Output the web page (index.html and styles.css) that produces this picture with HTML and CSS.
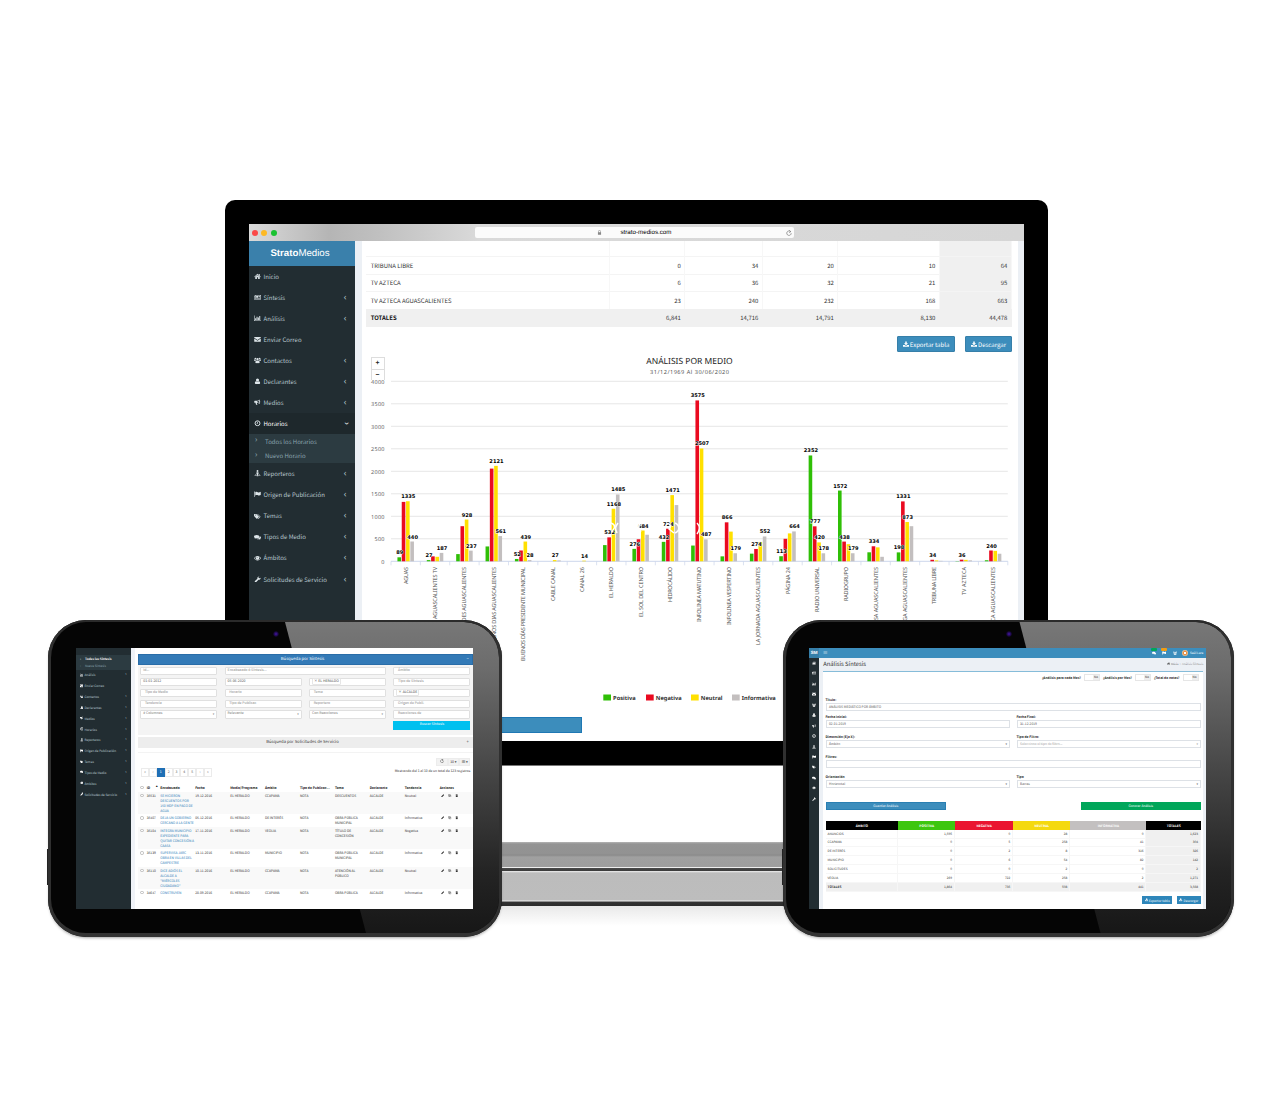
FILE: index.html
```html
<!DOCTYPE html>
<html lang="es">
<head>
  <meta charset="UTF-8" />
  <meta name="viewport" content="width=device-width, initial-scale=1.0" />
  <title>StratoMedios</title>
  <link rel="stylesheet" href="styles.css">
</head>
<body>
  <svg class="sprite" xmlns="http://www.w3.org/2000/svg">
    <symbol id="i-home" viewBox="0 0 16 16"><path d="M8 2 0 9l1 1.200 7-6 7 6L16 9l-2.500-2.200V2.500h-2v2.500zM8 5.500 2.500 10v4.500h4V10.500h3v4h4V10z"/></symbol>
    <symbol id="i-news" viewBox="0 0 18 16"><path fill-rule="evenodd" d="M3 2h15v12H1.500A1.500 1.500 0 0 1 0 12.500V4h3zm1.500 1.400v9.200h12V3.400zM1.200 5.200v7.300h1.800V5.200zM5.500 5h5v4h-5zm6 0h4v1h-4zm0 2h4v1h-4zm-6 3h10v1h-10z"/></symbol>
    <symbol id="i-chart" viewBox="0 0 18 16"><path d="M0 1h1.400v12.600H18V15H0zM3 8h2.500v4.500H3zm3.500-4H9v8.500H6.500zM10 6h2.500v6.500H10zm3.500-4H16v10.500h-2.500z"/></symbol>
    <symbol id="i-mail" viewBox="0 0 16 16"><path d="M0 2.500h16v1.700L8 10 0 4.200zM0 6l8 5.700L16 6v8H0z"/></symbol>
    <symbol id="i-users" viewBox="0 0 18 16"><circle cx="9" cy="5.500" r="3"/><circle cx="3.500" cy="3.500" r="2.200"/><circle cx="14.500" cy="3.500" r="2.200"/><path d="M0 6.500c1.500-1 3 0 4.500 0l.8 2.500H0zM18 6.500c-1.500-1-3 0-4.500 0L12.700 9H18zM3.500 14c0-3 1-5 3-5.300 1.500 1.200 3.500 1.200 5 0 2 .3 3 2.300 3 5.300 0 1-1 1.500-2 1.500h-7c-1 0-2-.5-2-1.500z"/></symbol>
    <symbol id="i-user" viewBox="0 0 16 16"><circle cx="8" cy="4.800" r="3.800"/><path d="M1.500 13c0-3 1-5 3.200-5 2 1.500 4.600 1.500 6.600 0 2.200 0 3.200 2 3.200 5 0 1.300-1 2-2 2h-9c-1 0-2-.7-2-2z"/></symbol>
    <symbol id="i-horn" viewBox="0 0 16 16"><path fill-rule="evenodd" d="M13.500 1v4.500a1.300 1.300 0 0 1 0 2.600V12.500C11.500 10.800 9.500 9.500 6.500 9.200c-.5 1.500 1 3.300 1.500 4.800H4.500C4 12.500 3 11 3.500 9.200H1.500A1.500 1.500 0 0 1 0 7.700V6a1.500 1.500 0 0 1 1.500-1.500h4.500C9 4.500 11.500 3 13.500 1zM12 4C10.500 5 9 5.500 7.500 5.700v2.200c1.500.2 3 .8 4.500 1.700z"/></symbol>
    <symbol id="i-clock" viewBox="0 0 16 16"><circle cx="8" cy="8" r="6" fill="none" stroke="currentColor" stroke-width="2.400"/><path d="M7.300 4.500h1.800v5H5.500V7.700h1.800z"/></symbol>
    <symbol id="i-street" viewBox="0 0 16 16"><circle cx="8" cy="2.500" r="2.300"/><path d="M5.500 5.300h5V10H9.800v4H6.200v-4h-.7zM4.500 11.500 2.500 12.800 8 15l5.500-2.200-2-1.300V10.200L16 12.800 8 16 0 12.800l4.500-2.600z"/></symbol>
    <symbol id="i-flag" viewBox="0 0 16 16"><path d="M0 1.500h1.800V15H.5zM2.500 3c3-2 5 0 7 .5s4-.5 6.500-1.500v8c-2 1-4 1.500-6 .8-2.500-1-4.500-1.300-7.500.5z"/></symbol>
    <symbol id="i-tags" viewBox="0 0 18 16"><path fill-rule="evenodd" d="M0 2h6l7 7-5.500 6L0 7.500zm3.200 1.700a1.300 1.300 0 1 0 .1 2.600 1.300 1.300 0 0 0-.1-2.600zM8 2h1.500l7.500 7-5.500 6-1.500-.8L15 9z"/></symbol>
    <symbol id="i-chat" viewBox="0 0 18 16"><path d="M7 2c4 0 7 2 7 4.500S11 11 7 11c-.7 0-1.400 0-2-.2C3.800 11.700 2.500 12 1 12c.8-.7 1.400-1.300 1.500-2C1 9.200 0 8 0 6.500 0 4 3 2 7 2zm8.300 3.500C17 6.400 18 7.600 18 9s-1 2.500-2.500 3.300c.1.700.7 1.300 1.500 2-1.500 0-2.800-.3-4-1.200-2.300.5-4.700 0-6.200-.9 5-.2 8.700-2.700 8.500-6.700z"/></symbol>
    <symbol id="i-eye" viewBox="0 0 18 16"><path fill-rule="evenodd" d="M9 2.500c4 0 7 2.500 9 5.500-2 3-5 5.500-9 5.500S2 11 0 8c2-3 5-5.500 9-5.500zM5.300 4.800A9 9 0 0 0 1.700 8C3.500 10.500 6 12.200 9 12.200s5.500-1.700 7.300-4.200a9 9 0 0 0-3.600-3.200 4.500 4.500 0 1 1-7.400 0zM9 4.500A3 3 0 0 0 6.500 7H8a1.500 1.500 0 0 1 1-1.200z"/></symbol>
    <symbol id="i-wrench" viewBox="0 0 16 16"><path d="M15.500 4.500c.8 3-2 5.500-5 4.800l-6 6c-1.700 1.500-4.500-1-2.800-2.800l6-6C7 3 9.500.5 12.800 1L10.500 3l.3 2.200 2.200.5z"/></symbol>
    <symbol id="i-down" viewBox="0 0 16 16"><path fill-rule="evenodd" d="M6 1h4v5h3.500L8 11.200 2.500 6H6zM0 10.500h4.500L8 13.500l3.500-3H16V15H0z"/></symbol>
    <symbol id="i-lock" viewBox="0 0 16 16"><path fill-rule="evenodd" d="M4 7V5a4 4 0 0 1 8 0v2h1v8H3V7zm1.600 0h4.800V5a2.400 2.400 0 0 0-4.800 0z"/></symbol>
    <symbol id="i-reload" viewBox="0 0 16 16"><path d="M12.500 4.500A6 6 0 1 0 14 8.500M8.500.5l4.300 3.800-4.500 2.800" fill="none" stroke="currentColor" stroke-width="1.600"/></symbol>
    <symbol id="i-pencil" viewBox="0 0 16 16"><path d="m1 15 1-4.500L11 1.500l3.500 3.500-9 9z"/></symbol>
    <symbol id="i-copy" viewBox="0 0 16 16"><path d="M2 2h8v8H2zM6 6h8v8H6z" fill="none" stroke="currentColor" stroke-width="1.600"/></symbol>
    <symbol id="i-trash" viewBox="0 0 16 16"><path d="M2 3h12v1.800H2zM6 1h4v2H6zM3.500 6h9l-.5 9H4z"/></symbol>
  </svg>

  <div class="stage">
    <div class="stand">
      <div class="neck"></div>
      <div class="foot"></div>
      <div class="stand-shadow"></div>
    </div>

    <!-- Monitor -->
    <div class="monitor">
      <div class="screen">
        <div class="titlebar">
          <i class="dot red"></i><i class="dot amber"></i><i class="dot green"></i>
          <div class="url">
            <svg class="lock"><use href="#i-lock"/></svg>
            <span>strato-medios.com</span>
            <svg class="reload"><use href="#i-reload"/></svg>
          </div>
        </div>
        <div class="app">
          <nav class="sidebar">
            <div class="brand"><b>Strato</b>Medios</div>
            <a class="item"><svg><use href="#i-home"/></svg>Inicio</a>
            <a class="item more"><svg><use href="#i-news"/></svg>Síntesis</a>
            <a class="item more"><svg><use href="#i-chart"/></svg>Análisis</a>
            <a class="item"><svg><use href="#i-mail"/></svg>Enviar Correo</a>
            <a class="item more"><svg><use href="#i-users"/></svg>Contactos</a>
            <a class="item more"><svg><use href="#i-user"/></svg>Declarantes</a>
            <a class="item more"><svg><use href="#i-horn"/></svg>Medios</a>
            <a class="item more open"><svg><use href="#i-clock"/></svg>Horarios</a>
            <div class="submenu">
              <a>Todos los Horarios</a>
              <a>Nuevo Horario</a>
            </div>
            <a class="item more"><svg><use href="#i-street"/></svg>Reporteros</a>
            <a class="item more"><svg><use href="#i-flag"/></svg>Origen de Publicación</a>
            <a class="item more"><svg><use href="#i-tags"/></svg>Temas</a>
            <a class="item more"><svg><use href="#i-chat"/></svg>Tipos de Medio</a>
            <a class="item more"><svg><use href="#i-eye"/></svg>Ámbitos</a>
            <a class="item more"><svg><use href="#i-wrench"/></svg>Solicitudes de Servicio</a>
          </nav>
          <main class="content">
            <div class="grid">
              <div class="row first"><span></span><span></span><span></span><span></span><span></span><span></span></div>
              <div class="row"><span>TRIBUNA LIBRE</span><span>0</span><span>34</span><span>20</span><span>10</span><span>64</span></div>
              <div class="row"><span>TV AZTECA</span><span>6</span><span>36</span><span>32</span><span>21</span><span>95</span></div>
              <div class="row"><span>TV AZTECA AGUASCALIENTES</span><span>23</span><span>240</span><span>232</span><span>168</span><span>663</span></div>
              <div class="row totals"><span>TOTALES</span><span>6,841</span><span>14,716</span><span>14,791</span><span>8,130</span><span>44,478</span></div>
            </div>
            <div class="actions">
              <a class="btn wide"><svg><use href="#i-down"/></svg>Exportar tabla</a>
              <a class="btn"><svg><use href="#i-down"/></svg>Descargar</a>
            </div>
            <div class="chart-box">
              <svg id="chart" width="650" height="350"></svg>
              <div class="zoom"><span>+</span><span>−</span></div>
            </div>
            <div class="save-bar"></div>
          </main>
        </div>
      </div>
    </div>

    <!-- Left tablet -->
    <div class="tablet tablet-left">
      <div class="bezel"></div>
      <i class="camera"></i>
      <div class="tscreen">
        <nav class="tside">
          <div class="tsub"><a class="on">Todas las Síntesis</a><a>Nueva Síntesis</a></div>
          <a class="titem more"><svg><use href="#i-chart"/></svg>Análisis</a>
          <a class="titem"><svg><use href="#i-mail"/></svg>Enviar Correo</a>
          <a class="titem more"><svg><use href="#i-users"/></svg>Contactos</a>
          <a class="titem more"><svg><use href="#i-user"/></svg>Declarantes</a>
          <a class="titem more"><svg><use href="#i-horn"/></svg>Medios</a>
          <a class="titem more"><svg><use href="#i-clock"/></svg>Horarios</a>
          <a class="titem more"><svg><use href="#i-street"/></svg>Reporteros</a>
          <a class="titem more"><svg><use href="#i-flag"/></svg>Origen de Publicación</a>
          <a class="titem more"><svg><use href="#i-tags"/></svg>Temas</a>
          <a class="titem more"><svg><use href="#i-chat"/></svg>Tipos de Medio</a>
          <a class="titem more"><svg><use href="#i-eye"/></svg>Ámbitos</a>
          <a class="titem more"><svg><use href="#i-wrench"/></svg>Solicitudes de Servicio</a>
        </nav>
        <div class="search">
          <div class="panel-head">Búsqueda por Síntesis<i>−</i></div>
          <div class="filters">
            <span class="in">Id...</span><span class="in span2">Encabezado ó Síntesis...</span><span class="in pad">Ámbito</span>
            <span class="in dark">01-01-2012</span><span class="in dark">05-06-2020</span><span class="in"><b>× EL HERALDO</b></span><span class="in pad">Tipo de Síntesis</span>
            <span class="in pad">Tipo de Medio</span><span class="in pad">Horario</span><span class="in pad">Tema</span><span class="in"><b>× ALCALDE</b></span>
            <span class="in pad">Tendencia</span><span class="in pad">Tipo de Publicac</span><span class="in pad">Reportero</span><span class="in pad">Origen de Publi.</span>
            <span class="in sel"># Columnas</span><span class="in sel">Relevante</span><span class="in sel">Con Reacciones</span><span class="in pad">Reacciones de</span>
            <span class="go">Buscar Síntesis</span>
          </div>
          <div class="panel-head light">Búsqueda por Solicitudes de Servicio<i>+</i></div>
          <div class="tools">
            <div class="toolset"><span><svg><use href="#i-reload"/></svg></span><span>10 ▾</span><span>▦ ▾</span></div>
          </div>
          <div class="pager-row">
            <div class="pager"><span>«</span><span>‹</span><span class="cur">1</span><span>2</span><span>3</span><span>4</span><span>5</span><span>›</span><span>»</span></div>
            <div class="count">Mostrando del 1 al 10 de un total de 123 registros</div>
          </div>
          <div class="list" id="list">
            <div class="lrow lhead"><i></i><span>ID</span><em>▲</em><span>Encabezado</span><span>Fecha</span><span>Medio/Programa</span><span>Ámbito</span><span>Tipo de Publicac...</span><span>Tema</span><span>Declarante</span><span>Tendencia</span><span>Acciones</span></div>
          </div>
        </div>
      </div>
    </div>

    <!-- Right tablet -->
    <div class="tablet tablet-right">
      <div class="bezel"></div>
      <i class="camera"></i>
      <div class="tscreen col">
        <div class="topbar">
          <b>SM</b><i class="burger">≡</i>
          <span class="note n-green"><svg><use href="#i-chat"/></svg></span>
          <span class="note n-orange"><svg><use href="#i-flag"/></svg></span>
          <span class="note"><svg><use href="#i-users"/></svg></span>
          <i class="avatar"></i><span class="who">Saúl Lara</span>
        </div>
        <div class="tbody">
          <nav class="mini">
            <svg><use href="#i-home"/></svg><svg><use href="#i-news"/></svg><svg><use href="#i-chart"/></svg><svg><use href="#i-mail"/></svg><svg><use href="#i-users"/></svg><svg><use href="#i-user"/></svg><svg><use href="#i-horn"/></svg><svg><use href="#i-clock"/></svg><svg><use href="#i-street"/></svg><svg><use href="#i-flag"/></svg><svg><use href="#i-tags"/></svg><svg><use href="#i-chat"/></svg><svg><use href="#i-eye"/></svg><svg><use href="#i-wrench"/></svg>
          </nav>
          <div class="analysis">
            <div class="page-head"><h1>Análisis Síntesis</h1><p><svg><use href="#i-home"/></svg> Inicio <span>&nbsp;›&nbsp; Análisis Síntesis</span></p></div>
            <div class="box">
              <div class="switches">
                <b>¿Análisis para cada Mes?</b><span class="switch"><i>No</i></span>
                <b>¿Análisis por Mes?</b><span class="switch"><i>No</i></span>
                <b>¿Total de notas?</b><span class="switch"><i>No</i></span>
              </div>
              <div class="form">
                <label class="full">Título:<span>ANÁLISIS MEDIÁTICO POR ÁMBITO</span></label>
                <label>Fecha Inicial:<span>02-01-2019</span></label>
                <label>Fecha Final:<span>31-12-2019</span></label>
                <label class="gap">Dimensión (Eje X):<span class="sel">Ámbito</span></label>
                <label class="gap">Tipo de Filtro:<span class="sel ph">Seleccione el tipo de filtro...</span></label>
                <label class="full gap">Filtros:<span></span></label>
                <label class="gap">Orientación<span class="sel">Horizontal</span></label>
                <label class="gap">Tipo<span class="sel">Barras</span></label>
              </div>
              <div class="pair"><span>Guardar Análisis</span><span class="ok">Generar Análisis</span></div>
              <div class="sums">
                <div class="srow shead"><span>ÁMBITO</span><span>POSITIVA</span><span>NEGATIVA</span><span>NEUTRAL</span><span>INFORMATIVA</span><span>TOTALES</span></div>
                <div class="srow"><span>ANUNCIOS</span><span>1,595</span><span>0</span><span>28</span><span>0</span><span>1,623</span></div>
                <div class="srow"><span>CCAPAMA</span><span>0</span><span>5</span><span>258</span><span>41</span><span>304</span></div>
                <div class="srow"><span>DE INTERÉS</span><span>0</span><span>2</span><span>8</span><span>316</span><span>326</span></div>
                <div class="srow"><span>MUNICIPIO</span><span>0</span><span>6</span><span>54</span><span>82</span><span>142</span></div>
                <div class="srow"><span>SOLICITUDES</span><span>0</span><span>0</span><span>2</span><span>0</span><span>2</span></div>
                <div class="srow"><span>VEOLIA</span><span>269</span><span>722</span><span>258</span><span>2</span><span>1,271</span></div>
                <div class="srow stotal"><span>TOTALES</span><span>1,864</span><span>735</span><span>508</span><span>441</span><span>3,568</span></div>
              </div>
              <div class="tactions"><a><svg><use href="#i-down"/></svg>Exportar tabla</a><a><svg><use href="#i-down"/></svg>Descargar</a></div>
            </div>
          </div>
        </div>
      </div>
    </div>
  </div>
  <script src="app.js"></script>
</body>
</html>
```

FILE: styles.css
```css
* {
  box-sizing: border-box;
  margin: 0;
  padding: 0;
}

body {
  font-family: "Noto Sans CJK JP", "Noto Sans", sans-serif;
  background: #fff;
  color: #333;
  width: 1280px;
  height: 1100px;
  overflow: hidden;
  text-rendering: geometricPrecision;
}

svg {
  fill: currentColor;
  flex: none;
}

i, em {
  font-style: normal;
}

.sprite {
  position: absolute;
  width: 0;
  height: 0;
}

.stage {
  position: relative;
  width: 1280px;
  height: 1100px;
}

/* Stand */
.stand {
  position: absolute;
  left: 485px;
  top: 842px;
  width: 315px;
}

.neck {
  height: 25px;
  background: linear-gradient(#b5b5b5 0, #949494 2px, #929292 12px, #8a8a8a 13px, #a0a0a0 15px, #9e9e9e 24px);
}

.foot {
  height: 39px;
  border-top: 1px solid #eee;
  background: linear-gradient(#4a4a4a 0, #3a3a3a 3px, #eee 3px, #bcbcbc 5px, #bdbdbd 32px, #eee 33px, #333 34px, #2c2c2c 38px);
}

.stand-shadow {
  height: 20px;
  background: linear-gradient(#e9e9e9, #fff);
}

/* Monitor */
.monitor {
  position: absolute;
  left: 225px;
  top: 200px;
  width: 823px;
  height: 566px;
  padding: 24px 24px 0;
  background: #000;
  border-radius: 10px 10px 8px 8px;
  border-bottom: 1px solid #777;
}

.screen {
  width: 775px;
  height: 517px;
  background: #fff;
  overflow: hidden;
}

.titlebar {
  display: flex;
  align-items: center;
  gap: 3.500px;
  height: 17px;
  padding-left: 2.500px;
  background: linear-gradient(90deg, #dadada 0, #b5b5b5 80px, #c0c0c0 130px, #dadada 230px, #d6d6d6 100%);
}

.dot {
  width: 6px;
  height: 6px;
  border-radius: 50%;
}

.red { background: #fb4948; }
.amber { background: #fdb924; }
.green { background: #1ac231; }

.url {
  display: flex;
  align-items: center;
  width: 319px;
  height: 11px;
  margin-left: 195px;
  padding: 0 2.500px 0 121.500px;
  border-radius: 2px;
  background: #fbfbfb;
  font: 6.200px/11px "Liberation Sans", sans-serif;
  color: #000;
}

.url span { margin-left: 19px; }
.lock { width: 5px; height: 5px; color: #888; }
.reload { width: 6px; height: 6px; margin-left: auto; color: #666; }

.app {
  display: flex;
  height: 500px;
}

.sidebar {
  flex: none;
  width: 106px;
  background: #222d32;
  color: #b8c7ce;
}

.brand {
  height: 24.500px;
  background: #3a80ab;
  color: #fff;
  font: 9.700px/26px "Liberation Sans", sans-serif;
  text-align: center;
  padding-right: 4px;
}

.item {
  display: flex;
  align-items: center;
  height: 21.080px;
  padding-left: 4.500px;
  font-size: 6px;
}

.item svg {
  width: 7px;
  height: 6.500px;
  margin-right: 3px;
  color: #dde5e9;
}

.more::after {
  content: "‹";
  width: 4px;
  margin: -2px 8px 0 auto;
  font: 9px/9px "Open Sans", sans-serif;
  text-align: center;
}

.item.open {
  background: #1e282c;
  color: #fff;
}

.item.open::after { transform: rotate(-90deg); margin-top: 0; }

.submenu {
  height: 29px;
  background: #2c3b41;
}

.submenu a {
  display: flex;
  align-items: center;
  height: 14.500px;
  padding-left: 6px;
  color: #8aa4af;
  font-size: 6px;
}

.submenu a::before {
  content: "›";
  width: 10px;
  margin-top: -2px;
  font: 8px/8px "Open Sans", sans-serif;
}

.content {
  flex: 1;
  min-width: 0;
  padding: 0 5.700px 0 4px;
  border-left: 7px solid #ecf0f5;
  border-right: 6px solid #ecf0f5;
}

.row {
  display: grid;
  grid-template-columns: 244.300px 75px 77.500px 75.500px 101.500px 72px;
  height: 17.500px;
  font-size: 5.950px;
  line-height: 17px;
}

.row.first { height: 15.800px; }

.row span {
  text-align: right;
  padding-right: 3.500px;
  border-right: 1px solid #f7f7f7;
  border-bottom: 1px solid #f4f4f4;
}

.row span:first-child {
  text-align: left;
  padding-left: 4.700px;
}

.row span:last-child,
.totals span { background: #f0f0f0; }
.totals span { border-color: #f0f0f0; }
.totals span:first-child { font-weight: bold; color: #111; }

.actions {
  display: flex;
  justify-content: flex-end;
  gap: 9.500px;
  margin-top: 9.500px;
}

.btn {
  display: flex;
  align-items: center;
  justify-content: center;
  gap: 1px;
  width: 47.500px;
  height: 16px;
  background: #3c8dbc;
  border: 1px solid #367fa9;
  border-radius: 1px;
  color: #fff;
  font-size: 6px;
}

.btn.wide { width: 58.500px; }
.btn svg { width: 6px; height: 6px; }

.chart-box {
  position: relative;
  height: 350px;
  margin-top: 3.700px;
}

#chart {
  display: block;
  overflow: visible;
  font-family: "Noto Sans", sans-serif;
}

.zoom {
  position: absolute;
  left: 4.500px;
  top: 1px;
  width: 14px;
}

.zoom span {
  display: block;
  height: 13px;
  border: 1px solid #ddd;
  font: bold 7px/12px "Open Sans", sans-serif;
  text-align: center;
  color: #222;
}

.zoom span + span {
  height: 10px;
  border-top: 0;
  border-bottom: 0;
}

.axis { font-size: 5.500px; fill: #666; letter-spacing: .25px; }
.cat { font-size: 5.500px; fill: #555; }
.value {
  font: bold 5.100px "DejaVu Sans", sans-serif;
  fill: #000;
  stroke: #fff;
  stroke-width: .8px;
  paint-order: stroke;
}
.legend { font-size: 5.700px; font-weight: bold; fill: #333; }
.glare { fill: none; stroke: #fff; stroke-width: 1.500px; }

.save-bar {
  width: 215.700px;
  height: 16px;
  margin-top: 11px;
  background: #3c8dbc;
  border: 1px solid #1f78b4;
}

/* Tablets */
.tablet {
  position: absolute;
  top: 620px;
  height: 317px;
  border-radius: 38px;
  background: #050505;
  box-shadow: 0 2px 3px -1px rgba(0, 0, 0, .35);
}

.tablet-left {
  left: 48px;
  width: 454px;
  padding: 27.500px 0 0 28px;
}

.tablet-right {
  left: 782.500px;
  width: 451.500px;
  padding: 27.500px 0 0 26.500px;
}

.tablet::before {
  content: "";
  position: absolute;
  left: -1px;
  top: 229px;
  width: 2px;
  height: 36px;
  background: #222;
}

.tablet::after {
  content: "";
  position: absolute;
  inset: 0;
  border: 3px solid #303030;
  border-top: 2px solid #2b2b2b;
  border-bottom: 4px solid #333;
  border-radius: 38px;
}

.bezel {
  position: absolute;
  inset: 2px 3px 4px;
  border-radius: 35px;
  background: linear-gradient(#777 0, #6c6c6c 15%, #444 50%, #242424 80%, #171717 100%);
  clip-path: polygon(234px 0, 100% 0, 100% 100%, 315px 100%);
}

.camera {
  position: absolute;
  left: 225px;
  top: 11px;
  width: 6px;
  height: 6px;
  border-radius: 50%;
  background: radial-gradient(#4416a8, #0a0418 70%);
}

.tablet-right .camera { left: 223.500px; }

.tscreen {
  position: relative;
  display: flex;
  width: 397.300px;
  height: 261px;
  background: #fff;
  overflow: hidden;
  font-size: 3.500px;
}

.tscreen.col { flex-direction: column; }

.tside {
  flex: none;
  width: 55px;
  padding-top: 7px;
  background: #222d32;
  color: #b8c7ce;
  font-size: 3.100px;
  white-space: nowrap;
}

.tsub {
  height: 15px;
  padding-left: 4px;
  background: #2c3b41;
  line-height: 7.500px;
  color: #8aa4af;
}

.tsub a { display: block; }
.tsub a::before { content: "›"; margin-right: 4px; }
.tsub .on { color: #fff; font-weight: bold; }

.titem {
  display: flex;
  align-items: center;
  height: 10.840px;
  padding-left: 3.500px;
}

.titem svg { width: 3.800px; height: 3.800px; margin-right: 1.200px; color: #fff; }
.titem.more::after { width: 2px; margin: -1px 4px 0 auto; font-size: 4.500px; line-height: 4px; }

.search {
  flex: 1;
  min-width: 0;
  border-left: 4px solid #f0f3f8;
  padding: 6.500px .5px 0 2.700px;
}

.panel-head {
  height: 10.500px;
  background: #337ab7;
  border: 1px solid #2a6da8;
  color: #fff;
  font-size: 4.200px;
  line-height: 8.500px;
  text-align: center;
}

.panel-head i { float: right; margin-right: 3px; }
.panel-head.light { background: #ededed; border-color: #ededed; color: #333; margin-top: 2px; }

.filters {
  display: grid;
  grid-template-columns: repeat(4, 77.100px);
  grid-auto-rows: 8.300px;
  column-gap: 7.300px;
  row-gap: 2.550px;
  height: 70.500px;
  padding: 2.500px;
  background: #f4f4f4;
}

.in {
  position: relative;
  padding-left: 2px;
  border: .6px solid #e0e0e0;
  border-radius: 1px;
  background: #fff;
  color: #888;
  line-height: 6.500px;
}

.in.pad { padding-left: 3.700px; }
.in.dark { color: #555; }
.in.sel { color: #777; }
.in.span2 { grid-column: span 2; }
.in b { font-weight: normal; color: #444; border: .5px solid #e6e6e6; border-radius: 1px; padding: 0 1px; }
.sel::after { content: "▾"; float: right; margin-right: 2px; font-size: 3px; }

.go {
  grid-column: 4;
  background: #00c0ef;
  color: #fff;
  text-align: center;
  line-height: 8px;
}

.tools {
  display: flex;
  justify-content: flex-end;
  margin-top: 4.500px;
  padding: 4.500px 2.500px 0 0;
  border-top: 1px solid #f3f3f3;
}

.toolset { display: flex; background: #f2f2f2; }
.toolset span {
  width: 11.300px;
  height: 8.500px;
  border: .5px solid #ececec;
  line-height: 7px;
  text-align: center;
  color: #333;
}
.toolset svg { width: 4px; height: 4px; }

.pager-row {
  display: flex;
  justify-content: space-between;
  padding: 0 2.500px 0 3.500px;
}

.pager { display: flex; margin-top: 2px; }
.pager span {
  width: 7.850px;
  height: 8.500px;
  border: .5px solid #ebebeb;
  text-align: center;
  line-height: 7px;
  color: #555;
}
.pager .cur { background: #1f6fb5; border-color: #1f6fb5; color: #fff; }
.count { margin-top: 1.500px; font-size: 3.350px; line-height: 6px; }

.list { margin-top: 7.500px; }

.lrow {
  display: grid;
  grid-template-columns: 9px 9px 4.500px 35px 35px 34.700px 35px 35px 34.800px 35px 35px 30px;
  padding: 1.300px 0 1.250px;
  font-size: 3.300px;
  line-height: 4.980px;
}

.lrow:nth-child(even) { background: #f9f9f9; }
.lrow a { color: #2a7ab8; white-space: pre; }
.lhead { font-weight: bold; color: #111; white-space: nowrap; }
.lhead em { font-size: 2px; }
.lrow i {
  width: 3.400px;
  height: 3.400px;
  margin: .8px 0 0 2.500px;
  border: .5px solid #bbb;
  border-radius: 50%;
}
.acts { display: flex; gap: 3.400px; padding: .8px 0 0 1.500px; }
.acts svg { width: 3.500px; height: 3.500px; }

/* Right tablet screen */
.topbar {
  display: flex;
  align-items: center;
  height: 10.500px;
  padding-right: 3px;
  background: #3c8dbc;
  color: #fff;
}

.topbar b { width: 10.300px; height: 10.500px; line-height: 9px; text-align: center; background: #367fa9; font-family: "Liberation Sans", sans-serif; font-size: 4.500px; }
.burger { flex: 1; padding-left: 3.500px; font-size: 5px; }
.note { position: relative; width: 10.400px; padding: 0 3px; }
.note svg { display: block; width: 4.200px; height: 4.200px; }
.n-green::before,
.n-orange::before {
  content: "";
  position: absolute;
  left: 2.300px;
  top: -3px;
  width: 6px;
  height: 3px;
  border-radius: 1px;
  background: #00a65a;
}
.n-orange::before { background: #f39c12; }
.avatar { width: 6px; height: 6px; margin: 0 2px; border-radius: 50%; background: radial-gradient(#fff 25%, #e58a3c 35%, #f7d9b8 80%); }
.who { font-size: 3.100px; }

.tbody { display: flex; flex: 1; }

.mini {
  display: flex;
  flex-direction: column;
  align-items: center;
  gap: 6.450px;
  width: 10.300px;
  padding-top: 3px;
  background: #222d32;
  color: #fff;
}

.mini svg { width: 4px; height: 4px; }

.analysis {
  flex: 1;
  padding: 0 3px 0 4px;
  background: #ecf0f5;
}

.page-head {
  display: flex;
  justify-content: space-between;
  height: 12.500px;
  line-height: 12px;
}

.page-head h1 { font-size: 5.800px; font-weight: normal; }
.page-head p { font-size: 2.900px; color: #444; }
.page-head p span { color: #888; }
.page-head svg { width: 3px; height: 3px; }

.box {
  height: 238px;
  padding: 0 2.300px;
  border-top: 1px solid #86bcd9;
  background: #fff;
}

.switches {
  display: flex;
  justify-content: flex-end;
  align-items: center;
  height: 12px;
  padding: 0 2.500px;
  font-size: 3.300px;
  color: #222;
}

.switch {
  width: 16px;
  height: 7px;
  margin: 0 3px;
  border: .5px solid #e6e6e6;
}
.switch:last-child { margin-right: 0; }
.switch i {
  display: block;
  width: 6px;
  height: 5px;
  margin-left: 8px;
  background: #eee;
  font-size: 3px;
  line-height: 5px;
  text-align: center;
}

.form {
  display: grid;
  grid-template-columns: 184.500px 184.500px;
  column-gap: 6.500px;
  margin-top: 12px;
}

.form label {
  height: 17.400px;
  padding-top: 1px;
  font-size: 3.300px;
  font-weight: bold;
  line-height: 6px;
  color: #222;
}

.form .full { grid-column: span 2; }
.form .gap { height: 20px; padding-top: 3.600px; }

.form span {
  display: block;
  height: 8.500px;
  padding-left: 2.500px;
  border: .7px solid #dde1e6;
  font-weight: normal;
  line-height: 6.500px;
  color: #555;
}
.form .ph { color: #999; }

.pair { display: flex; justify-content: space-between; margin-top: 11.500px; }
.pair span {
  width: 120.500px;
  height: 8.300px;
  background: #3c8dbc;
  border: .7px solid #2a7fb2;
  color: #fff;
  font-size: 3.300px;
  line-height: 6.500px;
  text-align: center;
}
.pair .ok { background: #00a65a; border-color: #00a65a; }

.sums { margin-top: 10.500px; }

.srow {
  display: grid;
  grid-template-columns: 72.800px 56.700px 58.300px 57px 76.200px 54.500px;
  height: 8.860px;
  font-size: 3.200px;
  line-height: 8px;
}
.srow span { text-align: right; padding-right: 2px; border-right: .5px solid #f6f6f6; border-bottom: .5px solid #f6f6f6; }
.srow span:first-child { text-align: left; padding-left: 2px; }
.srow span:last-child, .stotal span { background: #f0f0f0; }
.stotal span:first-child { font-weight: bold; }
.shead { height: 9px; font-weight: bold; color: #fff; line-height: 9px; }
.shead span, .shead span:first-child { padding: 0; border: 0; text-align: center; background: #000; }
.shead span:nth-child(2) { background: #3dc60f; }
.shead span:nth-child(3) { background: #ea1530; }
.shead span:nth-child(4) { background: #f4d90f; }
.shead span:nth-child(5) { background: #c3c0c0; }
.shead span:last-child { background: #000; }

.tactions { display: flex; justify-content: flex-end; gap: 4.500px; margin-top: 4.500px; }
.tactions a {
  display: flex;
  align-items: center;
  justify-content: center;
  gap: .6px;
  width: 30px;
  height: 8.300px;
  background: #2e86ba;
  color: #fff;
  font-size: 3.200px;
}
.tactions a + a { width: 24.300px; }
.tactions svg { width: 3.500px; height: 3.500px; }
```

FILE: app.js
```js
const colors = ["#2fbf06", "#ea0a20", "#ffe000", "#c3bfbf"];
const series = ["Positiva", "Negativa", "Neutral", "Informativa"];

// name, label length, values, indexes of the bars that carry a value label
const data = [
  ["AGUAS", 17, [89, 1320, 1335, 440], [0, 2, 3]],
  ["AGUASCALIENTES TV", 52, [27, 110, 100, 187], [0, 3]],
  ["BUENAS TARDES AGUASCALIENTES", 85, [160, 780, 928, 237], [2, 3]],
  ["BUENOS DIAS AGUASCALIENTES", 79, [330, 2060, 2121, 561], [2, 3]],
  ["BUENOS DÍAS PRESIDENTE MUNICIPAL", 94, [52, 240, 439, 28], [0, 2, 3]],
  ["CABLE CANAL", 34, [0, 0, 27, 20], [2]],
  ["CANAL 26", 25, [0, 0, 14, 0], [2]],
  ["EL HERALDO", 31, [360, 532, 1168, 1485], [1, 2, 3]],
  ["EL SOL DEL CENTRO", 50, [276, 490, 684, 590], [0, 2]],
  ["HIDROCÁLIDO", 35, [432, 724, 1471, 1250], [0, 1, 2]],
  ["INFOLINEA MATUTINO", 55, [350, 3575, 2507, 487], [1, 2, 3]],
  ["INFOLINEA VESPERTINO", 58, [110, 866, 660, 179], [1, 3]],
  ["LA JORNADA AGUASCALIENTES", 78, [170, 274, 430, 552], [1, 3]],
  ["PÁGINA 24", 27, [113, 500, 620, 664], [0, 3]],
  ["RADIO UNIVERSAL", 45, [2352, 777, 420, 178], [0, 1, 2, 3]],
  ["RADIOGRUPO", 34, [1572, 438, 380, 179], [0, 1, 3]],
  ["TELEVISA AGUASCALIENTES", 70, [200, 334, 310, 100], [1]],
  ["TVGA AGUASCALIENTES", 60, [198, 1331, 873, 780], [0, 1, 2]],
  ["TRIBUNA LIBRE", 37, [0, 34, 20, 10], [1]],
  ["TV AZTECA", 28, [6, 36, 32, 21], [1]],
  ["TV AZTECA AGUASCALIENTES", 75, [23, 240, 232, 168], [1]]
];

const left = 25, right = 641.8, zero = 205.3, unit = 0.045;
const step = (right - left) / data.length;
let out = "";

out += `<text x="323.500" y="8" text-anchor="middle" font-size="8.500" fill="#222" textLength="86.500">ANÁLISIS POR MEDIO</text>`;
out += `<text x="323.500" y="18.300" text-anchor="middle" font-size="5.600" fill="#555" textLength="79">31/12/1969 Al 30/06/2020</text>`;

for (let v = 0; v <= 4000; v += 500) {
  const y = zero - v * unit;
  out += `<path d="M${left} ${y}H${right}" stroke="${v ? "#e6e6e6" : "#ccd6eb"}"/>`;
  out += `<text class="axis" x="18.700" y="${y + 2.300}" text-anchor="end">${v}</text>`;
}

let labels = "";
data.forEach(([name, len, values, shown], n) => {
  const mid = left + step * (n + 0.5);
  out += `<path d="M${left + step * n} ${zero}v4" stroke="#ccd6eb" stroke-width=".7"/>`;
  values.forEach((v, i) => {
    const x = mid + (i - 1.5) * 4.300;
    const h = v * unit;
    out += `<rect x="${x - 1.800}" y="${zero - h}" width="3.600" height="${h}" fill="${colors[i]}"/>`;
    if (shown.includes(i)) {
      labels += `<text class="value" x="${x + .5}" y="${zero - h - 3}" text-anchor="middle">${v}</text>`;
    }
  });
  out += `<text class="cat" transform="translate(${mid + 2} 211) rotate(-90)" text-anchor="end" textLength="${len}">${name}</text>`;
});
out += `<path d="M${right} ${zero}v4" stroke="#ccd6eb" stroke-width=".7"/>` + labels;

// glare marks over the plot
out += `<path class="glare" d="M240 167q6-1 8 2c2 3-1 4-2 7M252 167c-3 4-3 6-1 10M275 167c-3 2-3 6 0 9M301 168c4-1 4 3 2 5l5 4M309 167c5 2 5 8 0 10M316 168c-4 3-4 7 0 9M331 167c3 3 3 7 0 11"/>`;

[237.300, 280, 325, 366].forEach((x, i) => {
  out += `<rect x="${x}" y="338.500" width="7.700" height="6" fill="${colors[i]}"/>`;
  out += `<text class="legend" x="${x + 9.800}" y="343.800">${series[i]}</text>`;
});

document.getElementById("chart").innerHTML = out;

const rows = [
  ["35531", "SE HICIERON\nDESCUENTOS POR\n150 MDP EN PAGO DE\nAGUA", "19-12-2016", "CCAPAMA", "DESCUENTOS", "Neutral"],
  ["35407", "DEJA UN GOBIERNO\nCERCANO A LA GENTE", "05-12-2016", "DE INTERÉS", "OBRA PÚBLICA MUNICIPAL", "Informativa"],
  ["35184", "INTEGRA MUNICIPIO\nEXPEDIENTE PARA\nQUITAR CONCESIÓN A\nCAASA", "17-11-2016", "VEOLIA", "TÍTULO DE CONCESIÓN", "Negativa"],
  ["35139", "SUPERVISA JARC\nOBRA EN VILLAS DEL\nCAMPESTRE", "13-11-2016", "MUNICIPIO", "OBRA PÚBLICA MUNICIPAL", "Informativa"],
  ["35110", "DICE ADIÓS EL\nALCALDE A\n\"MIÉRCOLES\nCIUDADANO\"", "10-11-2016", "CCAPAMA", "ATENCIÓN AL PÚBLICO", "Neutral"],
  ["34647", "CONSTRUYEN", "28-09-2016", "CCAPAMA", "OBRA PÚBLICA", "Informativa"]
];

const icons = ["pencil", "copy", "trash"].map(n => `<svg><use href="#i-${n}"/></svg>`).join("");
document.getElementById("list").innerHTML += rows.map(([id, title, date, scope, topic, trend]) =>
  `<div class="lrow"><i></i><span>${id}</span><em></em><a>${title}</a><span>${date}</span><span>EL HERALDO</span><span>${scope}</span><span>NOTA</span><span>${topic}</span><span>ALCALDE</span><span>${trend}</span><span class="acts">${icons}</span></div>`
).join("");
```
